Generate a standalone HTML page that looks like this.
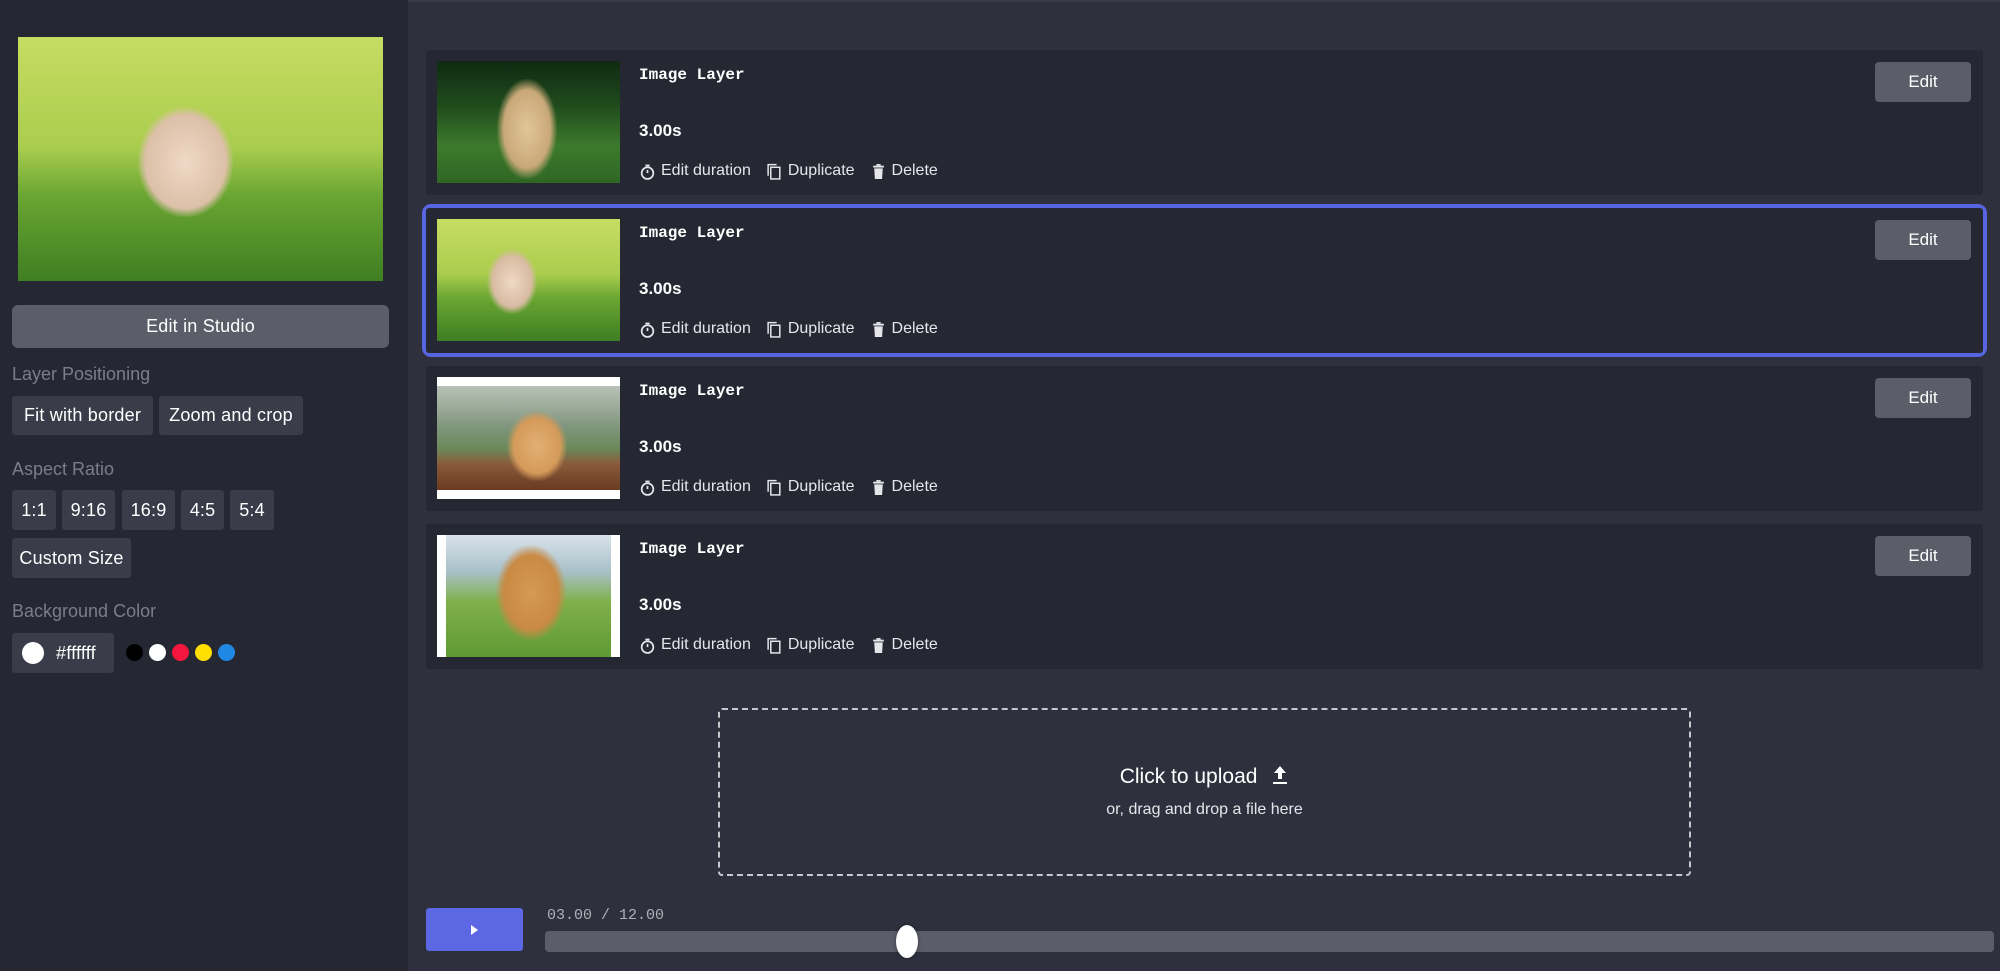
<!DOCTYPE html>
<html><head><meta charset="utf-8"><style>
*{box-sizing:border-box;margin:0;padding:0}
body{width:2000px;height:971px;overflow:hidden;background:#2f303d;font-family:"Liberation Sans",sans-serif;color:#fff;position:relative}
.side{position:absolute;left:0;top:0;width:408px;height:971px;background:#252733}
.abs{position:absolute}
.btn{position:absolute;background:#3a3c4a;border-radius:3px;color:#fff;font-size:18px;display:flex;align-items:center;justify-content:center;font-weight:500;letter-spacing:.2px}
.lbl{position:absolute;left:12px;color:#7b7d88;font-size:18px}
.card{position:absolute;left:426px;width:1557px;height:145px;background:#252733;border-radius:3px}
.thumb{position:absolute;left:11px;top:11px;width:183px;height:122px;overflow:hidden}
.title{position:absolute;left:213px;top:16px;font-family:"Liberation Mono",monospace;font-weight:bold;font-size:16px}
.dur{position:absolute;left:213px;top:71px;font-weight:bold;font-size:17px}
.acts{position:absolute;left:213px;top:111px;font-size:16px;color:#e6e6ea;display:flex;align-items:center;height:20px}
.acts svg{margin-right:5px}
.edit{position:absolute;right:12px;top:12px;width:96px;height:40px;background:#5b5e69;border-radius:4px;font-size:17px;display:flex;align-items:center;justify-content:center}
.dot{position:absolute;top:644px;width:17px;height:17px;border-radius:50%}
</style></head><body>
<div class="side">
  <div class="abs" style="left:18px;top:37px;width:365px;height:244px;background:linear-gradient(180deg,#c7dc62 0%,#aacd4e 45%,#6aa632 65%,#3f7e22 100%)">
    <div class="abs" style="left:120px;top:70px;width:95px;height:110px;background:radial-gradient(ellipse at center,#efd9c6 0%,#dcc0a8 60%,rgba(220,190,160,0) 72%)"></div>
  </div>
  <div class="btn" style="left:12px;top:305px;width:377px;height:43px;background:#5b5e69;border-radius:6px;font-size:18px">Edit in Studio</div>
  <div class="lbl" style="top:364px">Layer Positioning</div>
  <div class="btn" style="left:12px;top:396px;width:141px;height:39px">Fit with border</div>
  <div class="btn" style="left:159px;top:396px;width:144px;height:39px">Zoom and crop</div>
  <div class="lbl" style="top:459px">Aspect Ratio</div>
  <div class="btn" style="left:12px;top:490px;width:44px;height:40px">1:1</div>
  <div class="btn" style="left:62px;top:490px;width:53px;height:40px">9:16</div>
  <div class="btn" style="left:122px;top:490px;width:53px;height:40px">16:9</div>
  <div class="btn" style="left:181px;top:490px;width:43px;height:40px">4:5</div>
  <div class="btn" style="left:230px;top:490px;width:44px;height:40px">5:4</div>
  <div class="btn" style="left:12px;top:538px;width:119px;height:40px">Custom Size</div>
  <div class="lbl" style="top:601px">Background Color</div>
  <div class="btn" style="left:12px;top:633px;width:102px;height:40px;justify-content:flex-start;padding-left:44px">#ffffff</div>
  <div class="abs" style="left:22px;top:642px;width:22px;height:22px;border-radius:50%;background:#fff"></div>
  <div class="dot" style="left:126px;background:#000"></div>
  <div class="dot" style="left:149px;background:#fff"></div>
  <div class="dot" style="left:172px;background:#f5163f"></div>
  <div class="dot" style="left:195px;background:#ffe000"></div>
  <div class="dot" style="left:218px;background:#1f88e5"></div>
</div>
<div class="abs" style="left:408px;top:0;width:1592px;height:2px;background:#3a3c48"></div>

<svg width="0" height="0" style="position:absolute">
<defs>
<symbol id="clk" viewBox="0 0 16 16"><circle cx="8" cy="9.5" r="5.5" fill="none" stroke="#e6e6ea" stroke-width="1.6"/><rect x="6" y="1.5" width="4" height="1.6" fill="#e6e6ea"/><path d="M8 9.5V6.5" stroke="#e6e6ea" stroke-width="1.6"/></symbol>
<symbol id="dup" viewBox="0 0 16 16"><path d="M2 12V1.5h8" fill="none" stroke="#e6e6ea" stroke-width="1.4"/><rect x="4.5" y="4" width="8.5" height="11" fill="none" stroke="#e6e6ea" stroke-width="1.4"/></symbol>
<symbol id="del" viewBox="0 0 16 16"><rect x="3" y="2.5" width="10" height="1.8" fill="#e6e6ea"/><rect x="6" y="1" width="4" height="1.6" fill="#e6e6ea"/><path d="M4 5h8l-.6 10H4.6z" fill="#e6e6ea"/></symbol>
</defs></svg>

<div class="card" style="top:50px">
  <div class="thumb" style="background:linear-gradient(180deg,#0f2a12 0%,#1f4a1c 35%,#3c7a2c 70%,#2f6624 100%)"><div class="abs" style="left:60px;top:18px;width:60px;height:100px;background:radial-gradient(ellipse at center,#e0c69a 0%,#c9a878 55%,rgba(200,168,120,0) 72%)"></div></div>
  <div class="title">Image Layer</div><div class="dur">3.00s</div>
  <div class="acts"><svg width="17" height="17"><use href="#clk"/></svg>Edit duration<span style="width:15px"></span><svg width="17" height="17"><use href="#dup"/></svg>Duplicate<span style="width:15px"></span><svg width="17" height="17"><use href="#del"/></svg>Delete</div>
  <div class="edit">Edit</div>
</div>
<div class="abs" style="left:422px;top:204px;width:1565px;height:153px;border:4px solid #5865e0;border-radius:9px"></div>
<div class="card" style="top:208px">
  <div class="thumb" style="background:linear-gradient(180deg,#c7dc62 0%,#aacd4e 45%,#6aa632 65%,#3f7e22 100%)"><div class="abs" style="left:50px;top:30px;width:50px;height:65px;background:radial-gradient(ellipse at center,#efd9c6 0%,#d8bba2 55%,rgba(216,187,162,0) 72%)"></div></div>
  <div class="title">Image Layer</div><div class="dur">3.00s</div>
  <div class="acts"><svg width="17" height="17"><use href="#clk"/></svg>Edit duration<span style="width:15px"></span><svg width="17" height="17"><use href="#dup"/></svg>Duplicate<span style="width:15px"></span><svg width="17" height="17"><use href="#del"/></svg>Delete</div>
  <div class="edit">Edit</div>
</div>
<div class="card" style="top:366px">
  <div class="thumb" style="background:#fff"><div class="abs" style="left:0;top:9px;width:183px;height:104px;background:linear-gradient(180deg,#b9c2b8 0%,#7f957c 40%,#6b8a5a 60%,#8a5a3a 75%,#6a3a22 100%)"><div class="abs" style="left:70px;top:25px;width:60px;height:70px;background:radial-gradient(ellipse at center,#e2b074 0%,#d49a5a 55%,rgba(212,154,90,0) 72%)"></div></div></div>
  <div class="title">Image Layer</div><div class="dur">3.00s</div>
  <div class="acts"><svg width="17" height="17"><use href="#clk"/></svg>Edit duration<span style="width:15px"></span><svg width="17" height="17"><use href="#dup"/></svg>Duplicate<span style="width:15px"></span><svg width="17" height="17"><use href="#del"/></svg>Delete</div>
  <div class="edit">Edit</div>
</div>
<div class="card" style="top:524px">
  <div class="thumb" style="background:#fff"><div class="abs" style="left:9px;top:0;width:165px;height:122px;background:linear-gradient(180deg,#d8e2ea 0%,#a9c0c8 30%,#7fb04a 55%,#5f9a34 100%)"><div class="abs" style="left:50px;top:10px;width:70px;height:95px;background:radial-gradient(ellipse at center,#d69a52 0%,#c98a44 55%,rgba(201,138,68,0) 72%)"></div></div></div>
  <div class="title">Image Layer</div><div class="dur">3.00s</div>
  <div class="acts"><svg width="17" height="17"><use href="#clk"/></svg>Edit duration<span style="width:15px"></span><svg width="17" height="17"><use href="#dup"/></svg>Duplicate<span style="width:15px"></span><svg width="17" height="17"><use href="#del"/></svg>Delete</div>
  <div class="edit">Edit</div>
</div>

<div class="abs" style="left:718px;top:708px;width:973px;height:168px;border:2px dashed #c8c8cc;border-radius:4px"></div>
<div class="abs" style="left:718px;top:764px;width:973px;text-align:center;font-size:21px">Click to upload <svg width="18" height="22" viewBox="0 0 18 22" style="vertical-align:-3px;margin-left:8px"><path d="M9 2L3 9h4v6h4V9h4z" fill="#fff"/><rect x="2" y="18" width="14" height="2" fill="#fff"/></svg></div>
<div class="abs" style="left:718px;top:801px;width:973px;text-align:center;font-size:16px;color:#e6e6ea">or, drag and drop a file here</div>

<div class="abs" style="left:426px;top:908px;width:97px;height:43px;background:#5b67e3;border-radius:3px"><svg class="abs" style="left:44px;top:16px" width="10" height="12" viewBox="0 0 10 12"><path d="M1 1l7 5-7 5z" fill="#fff"/></svg></div>
<div class="abs" style="left:547px;top:907px;font-family:'Liberation Mono',monospace;font-size:15px;color:#b0b0b6">03.00 / 12.00</div>
<div class="abs" style="left:545px;top:931px;width:1449px;height:21px;background:#5b5e69;border-radius:4px"></div>
<div class="abs" style="left:896px;top:925px;width:22px;height:33px;background:#fff;border-radius:50%;box-shadow:0 0 4px rgba(0,0,0,.4)"></div>
</body></html>
